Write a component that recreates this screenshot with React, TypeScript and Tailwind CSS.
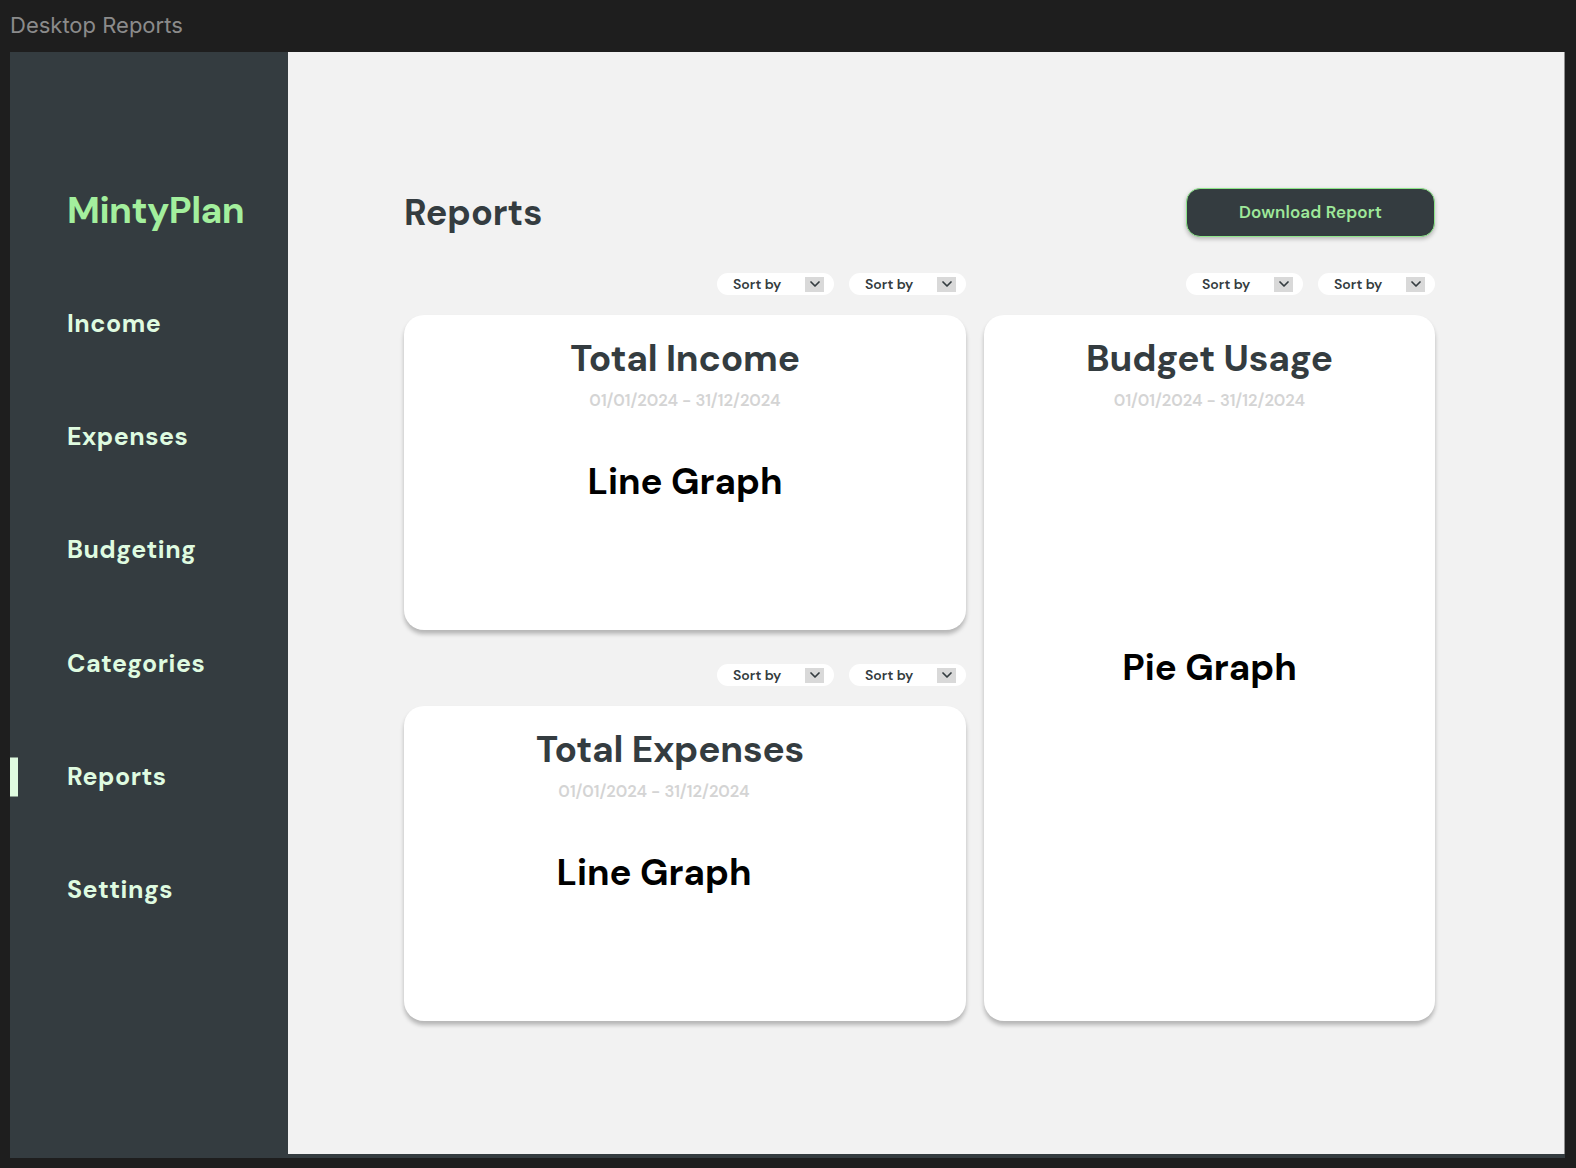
import { ChevronDown } from "lucide-react";

const font = { fontFamily: "'DM Sans', Inter, 'Noto Sans', sans-serif" };

const navItems = ["Income", "Expenses", "Budgeting", "Categories", "Reports", "Settings"];

function SortBy() {
    return (
        <div className="flex items-center justify-between w-[117px] h-[22px] pl-4 pr-[10px] bg-white rounded-full">
            <span className="text-[14px] font-semibold text-[#343c40] leading-none">Sort by</span>
            <div className="w-[19px] h-[15px] bg-[#d9d9d9] flex items-center justify-center">
                <ChevronDown size={16} strokeWidth={2.6} className="text-[#343c40]" />
            </div>
        </div>
    );
}

function SortRow() {
    return (
        <div className="flex justify-end gap-[15px] h-[22px]">
            <SortBy />
            <SortBy />
        </div>
    );
}

function Sidebar() {
    return (
        <aside className="w-[278px] shrink-0 pt-[135px]">
            <div className="pl-[57px] h-[48px] leading-[48px] text-[37.2px] font-bold text-[#a3ef9d] tracking-[-0.015em]">
                MintyPlan
            </div>
            <nav className="mt-[32px]">
                {navItems.map((item) => (
                    <div key={item} className="relative h-[113.3px] flex items-center pl-[57px]">
                        {item === "Reports" && (
                            <div className="absolute left-0 top-1/2 -translate-y-1/2 w-[8px] h-[39px] bg-[#dffbe0]"></div>
                        )}
                        <span className="text-[25px] font-bold text-[#dffbe0] tracking-[0.02em]">{item}</span>
                    </div>
                ))}
            </nav>
        </aside>
    );
}

export default function App() {
    return (
        <div className="w-[1576px] h-[1168px] bg-[#1e1e1e] overflow-hidden" style={font}>
            <div className="h-[52px] flex items-center pl-[10px] pb-[2px]">
                <span className="text-[22px] text-[#8b8b8b] leading-none" style={{ fontFamily: "Inter, sans-serif" }}>
                    Desktop Reports
                </span>
            </div>

            <div className="ml-[10px] w-[1555px] h-[1106px] bg-[#343c40] flex items-start">
                <Sidebar />

                <main className="w-[1277px] h-[1102px] bg-[#f2f2f2] border-r border-[#8f8f8f] pl-[116px] pt-[136px]">
                    <div className="w-[1031px]">
                        {/* header */}
                        <div className="flex items-center justify-between h-[49px]">
                            <h1 className="text-[36px] font-bold text-[#343c40] leading-none">Reports</h1>
                            <button className="w-[249px] h-[49px] rounded-[14px] bg-[#343c40] border border-[#8ee68a] shadow-[0_2px_4px_rgba(0,0,0,0.25)] text-[17px] font-semibold text-[#9ee89a] tracking-[0.01em]">
                                Download Report
                            </button>
                        </div>

                        <div className="mt-[36px] grid grid-cols-[562px_451px] gap-x-[18px]">
                            {/* left column */}
                            <div className="flex flex-col">
                                <SortRow />
                                <div className="mt-[20px] h-[315px] bg-white rounded-[20px] shadow-[0_4px_4px_rgba(0,0,0,0.25)] pt-[21px] flex flex-col items-center">
                                    <h2 className="h-[44px] leading-[44px] text-[37px] font-bold text-[#343c40] tracking-[-0.005em]">Total Income</h2>
                                    <p className="mt-[11px] h-[20px] leading-[20px] text-[16.5px] font-semibold text-[#d4d4d4]">01/01/2024 - 31/12/2024</p>
                                    <div className="mt-[47px] h-[48px] leading-[48px] text-[36.6px] font-bold text-black">Line Graph</div>
                                </div>

                                <div className="mt-[34px]">
                                    <SortRow />
                                </div>
                                <div className="mt-[20px] h-[315px] bg-white rounded-[20px] shadow-[0_4px_4px_rgba(0,0,0,0.25)] pt-[21px] flex flex-col items-center">
                                    <h2 className="h-[44px] leading-[44px] text-[37px] font-bold text-[#343c40] tracking-[-0.005em] pr-[30px]">Total Expenses</h2>
                                    <p className="mt-[11px] h-[20px] leading-[20px] text-[16.5px] font-semibold text-[#d4d4d4] pr-[62px]">01/01/2024 - 31/12/2024</p>
                                    <div className="mt-[47px] h-[48px] leading-[48px] text-[36.6px] font-bold text-black pr-[62px]">Line Graph</div>
                                </div>
                            </div>

                            {/* right column */}
                            <div className="flex flex-col">
                                <SortRow />
                                <div className="mt-[20px] h-[706px] bg-white rounded-[20px] shadow-[0_4px_4px_rgba(0,0,0,0.25)] pt-[21px] flex flex-col items-center">
                                    <h2 className="h-[44px] leading-[44px] text-[37px] font-bold text-[#343c40] tracking-[-0.005em]">Budget Usage</h2>
                                    <p className="mt-[11px] h-[20px] leading-[20px] text-[16.5px] font-semibold text-[#d4d4d4]">01/01/2024 - 31/12/2024</p>
                                    <div className="mt-[233px] h-[48px] leading-[48px] text-[36.6px] font-bold text-black">Pie Graph</div>
                                </div>
                            </div>
                        </div>
                    </div>
                </main>
            </div>
        </div>
    );
}
